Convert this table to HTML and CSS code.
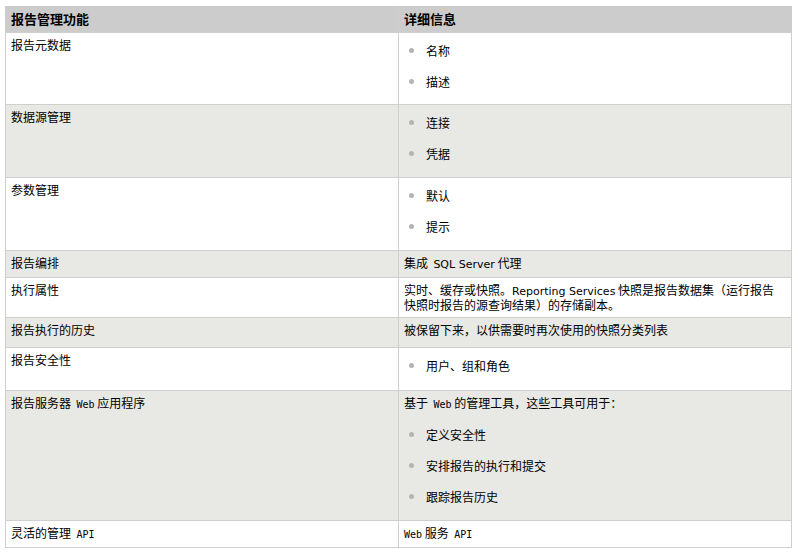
FILE: index.html
```html
<!DOCTYPE html>
<html lang="zh-CN">
<head>
<meta charset="utf-8">
<title>报告管理功能</title>
<link rel="stylesheet" href="styles.css">
</head>
<body>
<table class="tbl">
  <colgroup><col class="c1"><col class="c2"></colgroup>
  <thead>
    <tr class="hd"><th>报告管理功能</th><th>详细信息</th></tr>
  </thead>
  <tbody>
    <tr class="h72"><td>报告元数据</td><td><ul class="bl"><li>名称</li><li>描述</li></ul></td></tr>
    <tr class="h73 alt"><td>数据源管理</td><td><ul class="bl"><li>连接</li><li>凭据</li></ul></td></tr>
    <tr class="h73"><td>参数管理</td><td><ul class="bl"><li>默认</li><li>提示</li></ul></td></tr>
    <tr class="h27 alt"><td>报告编排</td><td>集成&nbsp; <span class="en">SQL Server</span> 代理</td></tr>
    <tr class="h40"><td>执行属性</td><td class="nw two">实时、缓存或快照。<span class="en">Reporting Services</span> 快照是报告数据集（运行报告<br>快照时报告的源查询结果）的存储副本。</td></tr>
    <tr class="h30 alt"><td>报告执行的历史</td><td>被保留下来，以供需要时再次使用的快照分类列表</td></tr>
    <tr class="h43"><td>报告安全性</td><td><ul class="bl"><li>用户、组和角色</li></ul></td></tr>
    <tr class="h130 alt"><td>报告服务器&nbsp; <span class="mono">Web</span> 应用程序</td><td><p class="lead">基于&nbsp; <span class="mono">Web</span> 的管理工具，这些工具可用于：</p><ul class="bl after"><li>定义安全性</li><li>安排报告的执行和提交</li><li>跟踪报告历史</li></ul></td></tr>
    <tr class="h27"><td>灵活的管理&nbsp; <span class="mono">API</span></td><td><span class="mono">Web</span> 服务&nbsp; <span class="mono">API</span></td></tr>
  </tbody>
</table>
</body>
</html>
```

FILE: styles.css
```css
html, body {
  margin: 0;
  padding: 0;
  background: #ffffff;
}
body {
  font-family: "Noto Sans CJK SC", "Noto Sans", sans-serif;
  font-size: 12px;
  color: #000000;
}
.tbl {
  border-collapse: collapse;
  table-layout: fixed;
  width: 786px;
  margin: 6px 0 0 5px;
}
.c1 { width: 393px; }
.c2 { width: 393px; }
.tbl th,
.tbl td {
  border: 1px solid #cfcfcf;
  padding: 4px 5px 6px;
  line-height: 15px;
  vertical-align: top;
  text-align: left;
}
.tbl th {
  background: #cccccc;
  border-color: #cccccc #cfcfcf #cfcfcf #cccccc;
  font-size: 13px;
  font-weight: bold;
  padding-top: 4px;
}
.tbl .hd th:last-child { border-right-color: #cccccc; }
.hd { height: 26px; }
.alt td { background: #e8e8e4; }
.h72 { height: 72px; }
.h73 { height: 73px; }
.h27 { height: 27px; }
.h40 { height: 40px; }
.h30 { height: 30px; }
.h43 { height: 43px; }
.h130 { height: 130px; }
.nw { white-space: nowrap; }
.tbl td.two { padding-bottom: 4px; }
.en {
  font-family: "DejaVu Sans", sans-serif;
  font-size: 11px;
  line-height: 1;
}
.mono {
  font-family: "DejaVu Sans Mono", monospace;
  font-size: 10px;
  line-height: 1;
}
.lead { margin: 0; }
.bl {
  list-style: none;
  margin: 6px 0 0 0;
  padding: 0;
}
.bl.after { margin-top: 17px; }
.bl li {
  position: relative;
  padding-left: 22px;
}
.bl li + li { margin-top: 16px; }
.bl li::before {
  content: "";
  position: absolute;
  left: 5px;
  top: 5px;
  width: 5px;
  height: 5px;
  border-radius: 50%;
  background: #b4b4b4;
}
```
